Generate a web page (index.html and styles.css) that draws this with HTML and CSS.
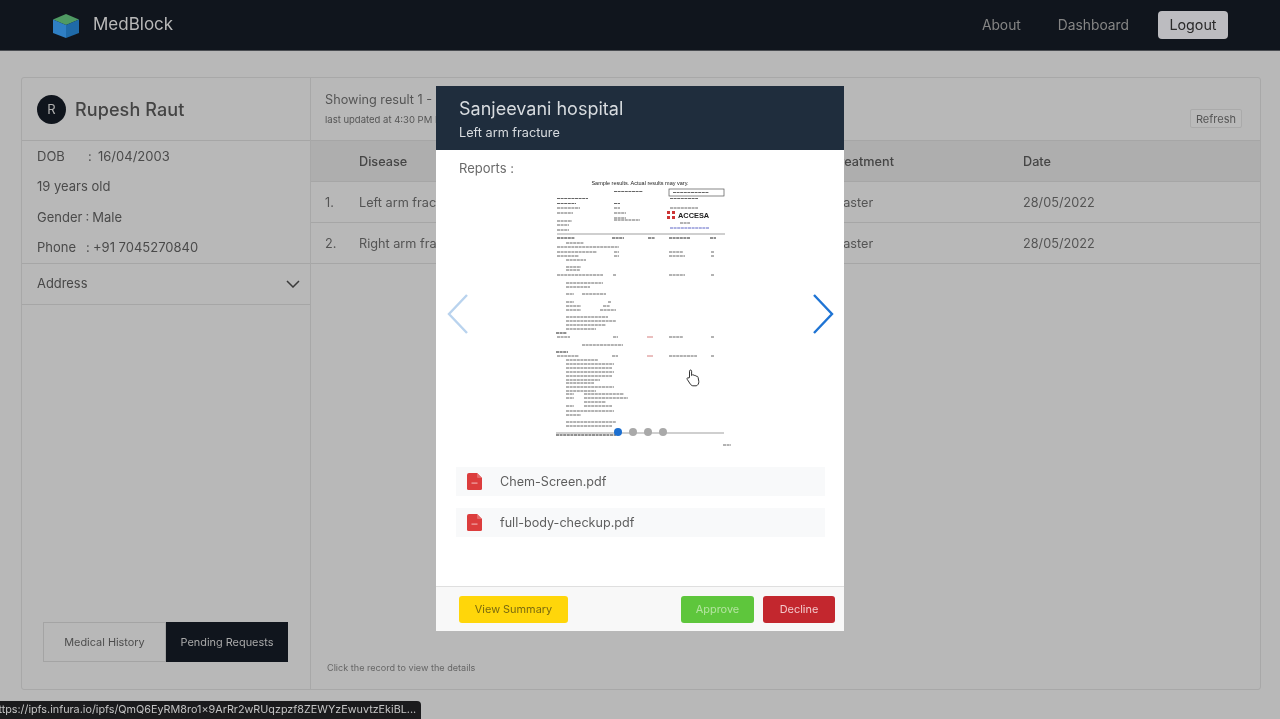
FILE: index.html
```html
<!DOCTYPE html>
<html lang="en">
<head>
<meta charset="utf-8">
<title>MedBlock</title>
<link rel="stylesheet" href="styles.css">
</head>
<body>
<div class="app">
  <header class="nav">
    <div class="brand">
      <svg class="cube" viewBox="0 0 28 26" width="28" height="26">
        <path d="M14 1 27 6.5 14 12 1 6.5Z" fill="#4f9a63"/>
        <path d="M1 6.5 14 12V25L1 20Z" fill="#2f7fc4"/>
        <path d="M27 6.5 14 12V25L27 20Z" fill="#1f6aa8"/>
      </svg>
      <span class="brand-name">MedBlock</span>
    </div>
    <nav class="nav-links">
      <a class="nav-link nav-link-about">About</a>
      <a class="nav-link">Dashboard</a>
      <button class="logout">Logout</button>
    </nav>
  </header>

  <main class="content">
    <section class="panel">
      <aside class="side">
        <div class="profile">
          <span class="avatar">R</span>
          <span class="profile-name">Rupesh Raut</span>
        </div>
        <div class="facts">
          <p class="fact"><span class="fact-dob">DOB</span><span class="fact-colon">:</span>16/04/2003</p>
          <p class="fact">19 years old</p>
          <p class="fact fact-gender">Gender : Male</p>
          <p class="fact"><span class="fact-phone">Phone</span><span class="fact-colon-tight">:</span>+91 7045270840</p>
        </div>
        <div class="address">
          <span>Address</span>
          <svg viewBox="0 0 14 8" width="14" height="8"><path d="M1 1 7 7 13 1" fill="none" stroke="#3a3a3a" stroke-width="1.5"/></svg>
        </div>
        <div class="tabs">
          <button class="tab">Medical History</button>
          <button class="tab tab-active">Pending Requests</button>
        </div>
      </aside>

      <div class="records">
        <div class="records-top">
          <div>
            <p class="showing">Showing result 1 - 2 of 2</p>
            <p class="updated">last updated at 4:30 PM IST</p>
          </div>
          <button class="refresh">Refresh</button>
        </div>
        <div class="row row-head"><span></span><span>Disease</span><span>Treatment</span><span>Date</span></div>
        <div class="row"><span>1.</span><span>Left arm fracture</span><span>Plaster</span><span>28/05/2022</span></div>
        <div class="row"><span>2.</span><span>Right arm fracture</span><span>Plaster</span><span>28/05/2022</span></div>
        <p class="hint">Click the record to view the details</p>
      </div>
    </section>
  </main>
</div>

<div class="modal">
  <div class="modal-head">
    <h2 class="modal-title">Sanjeevani hospital</h2>
    <p class="modal-sub">Left arm fracture</p>
  </div>
  <div class="modal-body">
    <p class="reports-label">Reports :</p>
    <div class="carousel">
      <svg class="doc" viewBox="0 0 200 280" width="200" height="280">
        <text class="doc-title" x="100" y="10" text-anchor="middle">Sample results. Actual results may vary.</text>
        <rect x="129" y="14" width="55" height="7" fill="none" stroke="#555" stroke-width=".7"/>
        <path class="doc-l" d="M74 16.5h29M133 17.5h36M17 23.5h31M130 23.5h28M17 28.5h19M74 28.5h6M17 33h23M74 33h6M130 33h28M17 38h16M74 38h12M74 43h12M74 45h26M17 46h15M17 50h12M17 55h12"/>
        <rect x="127" y="36" width="3" height="3" fill="#c33"/><rect x="132" y="36" width="3" height="3" fill="#c33"/>
        <rect x="127" y="41" width="3" height="3" fill="#c33"/><rect x="132" y="41" width="3" height="3" fill="#c33"/>
        <text class="doc-logo" x="138" y="43">ACCESA</text>
        <path class="doc-l" d="M140 48h10"/>
        <path class="doc-link" d="M130 53h39"/>
        <path class="doc-rule" d="M17 59h168"/>
        <path class="doc-b" d="M17 63h18M72 63h12M108 63h7M129 63h21M170 63h6"/>
        <path class="doc-l" d="M26 68h18M17 72h62M17 77h40M74 77h5M129 77h14M171 77h3M17 81h22M74 81h5M129 81h16M171 81h3M26 85h20M26 92h15M26 95h14M17 100h46M73 100h3M129 100h16M171 100h3M26 108h37M26 112h24M26 119h8M42 119h24M26 127h8M68 127h3M26 131h15M63 131h7M26 135h15M60 135h16M26 142h42M26 146h50M26 150h40M26 154h30"/>
        <path class="doc-b" d="M16 158h11"/>
        <path class="doc-l" d="M17 162h13M73 162h5M129 162h14M171 162h3M42 170h41"/>
        <path class="doc-red" d="M107 162h6M107 181h6"/>
        <path class="doc-b" d="M16 177h12"/>
        <path class="doc-l" d="M17 181h22M72 181h6M129 181h28M171 181h3M26 185h32M26 189h48M26 193h46M26 197h48M26 201h46M26 205h34M26 208h28M26 212h48M26 216h30M26 219h8M44 219h40M26 223h8M44 223h44M44 227h22M26 231h8M44 231h28M26 236h48M26 240h15M26 247h50M26 251h46"/>
        <path class="doc-rule" d="M16 258h168"/>
        <path class="doc-b" d="M16 260h60"/>
        <path class="doc-l" d="M183 270h8"/>
      </svg>
      <svg class="arrow arrow-prev" viewBox="0 0 22 40" width="22" height="40"><path d="M20 1 2 20 20 39" fill="none" stroke="#b9d3ee" stroke-width="2.4"/></svg>
      <svg class="arrow arrow-next" viewBox="0 0 22 40" width="22" height="40"><path d="M2 1 20 20 2 39" fill="none" stroke="#1f74d4" stroke-width="2.4"/></svg>
      <div class="dots">
        <span class="dot dot-on"></span><span class="dot"></span><span class="dot"></span><span class="dot"></span>
      </div>
      <svg class="pointer" viewBox="0 0 14 18" width="14" height="18">
        <path d="M3.5 8V2.2C3.5 .6 5.6 .6 5.6 2.2V6.5L6 6.3C6.4 5.3 8 5.5 8.1 6.7 8.6 6 10 6.3 10.1 7.4 10.7 6.9 12 7.3 12.1 8.5L12.8 12.3C13 14.5 11.8 16.5 10.2 16.8H6.8C5.3 16.6 4.5 15.4 3.6 14L1.2 10.3C.6 9 2 8 3 9.2Z" fill="#fff" stroke="#333" stroke-width="1"/>
      </svg>
    </div>
    <ul class="files">
      <li class="file">
        <svg viewBox="0 0 15 17" width="15" height="17"><path d="M2 0H10L15 5V15.500A1.500 1.500 0 0 1 13.500 17H1.500A1.500 1.500 0 0 1 0 15.500V2A2 2 0 0 1 2 0Z" fill="#dc3d3d"/><path d="M10 0 15 5H11A1 1 0 0 1 10 4Z" fill="#e56a6a"/><rect x="4.500" y="9.500" width="6" height="1.200" fill="#f0a8a8"/></svg>
        <span class="file-name">Chem-Screen.pdf</span>
      </li>
      <li class="file">
        <svg viewBox="0 0 15 17" width="15" height="17"><path d="M2 0H10L15 5V15.500A1.500 1.500 0 0 1 13.500 17H1.500A1.500 1.500 0 0 1 0 15.500V2A2 2 0 0 1 2 0Z" fill="#dc3d3d"/><path d="M10 0 15 5H11A1 1 0 0 1 10 4Z" fill="#e56a6a"/><rect x="4.500" y="9.500" width="6" height="1.200" fill="#f0a8a8"/></svg>
        <span class="file-name">full-body-checkup.pdf</span>
      </li>
    </ul>
  </div>
  <div class="modal-foot">
    <button class="btn btn-summary">View Summary</button>
    <div class="foot-actions">
      <button class="btn btn-approve">Approve</button>
      <button class="btn btn-decline">Decline</button>
    </div>
  </div>
</div>

<div class="status-url"><span>https://ipfs.infura.io/ipfs/QmQ6EyRM8ro1x9ArRr2wRUqzpzf8ZEWYzEwuvtzEkiBL...</span></div>
</body>
</html>
```
FILE: styles.css
```css
* { box-sizing: border-box; }
html, body { margin: 0; padding: 0; height: 100%; overflow: hidden; }
body { background: #b8b8b8; color: #474747; font-family: Inter, "Liberation Sans", sans-serif; position: relative; }
p, h2, ul { margin: 0; padding: 0; }
button { font-family: inherit; }

.app { height: 719px; display: flex; flex-direction: column; filter: blur(.4px); }

.nav { height: 51px; flex: none; background: #10151d; border-bottom: 1px solid #4a4d52; display: flex; align-items: center; justify-content: space-between; padding: 0 52px; }
.brand { display: flex; align-items: center; gap: 13px; }
.cube { margin-top: 2px; }
.brand-name { font-size: 17px; color: #b9b9b9; position: relative; top: -1px; }
.nav-links { display: flex; align-items: center; }
.nav-link { font-size: 13.800px; color: #858585; margin-right: 29px; }
.nav-link-about { margin-right: 37px; }
.logout { width: 70px; height: 28px; background: #bcbcc0; color: #2a2a2a; border: 0; border-radius: 4px; font-size: 14.300px; padding: 0 0 1px; }

.content { flex: 1; padding: 26px 19px 29px 21px; min-height: 0; }
.panel { height: 100%; display: flex; border: 1px solid #a8a8a8; border-radius: 3px; }

.side { width: 289px; flex: none; border-right: 1px solid #a8a8a8; display: flex; flex-direction: column; }
.profile { height: 63px; display: flex; align-items: center; gap: 9px; padding-left: 15px; border-bottom: 1px solid #a6a6a6; }
.avatar { width: 29px; height: 29px; border-radius: 50%; background: #10151d; color: #b0b0b0; font-size: 13px; display: flex; align-items: center; justify-content: center; }
.profile-name { font-size: 18px; font-weight: 500; color: #444; letter-spacing: .1px; }
.facts { height: 123px; padding: 0 15px; border-bottom: 1px solid #a6a6a6; }
.fact { font-size: 13px; height: 30.300px; line-height: 30.300px; color: #4a4a4a; }
.fact-gender { word-spacing: -.6px; }
.fact-dob { display: inline-block; width: 51px; }
.fact-phone { display: inline-block; width: 49px; }
.fact-colon { display: inline-block; width: 10px; }
.fact-colon-tight { display: inline-block; width: 7px; }
.address { height: 41px; display: flex; align-items: center; justify-content: space-between; padding: 0 10px 1px 15px; border-bottom: 1px solid #a6a6a6; font-size: 12.900px; }
.tabs { margin: auto 0 27px 21px; display: flex; }
.tab { width: 123px; height: 40px; font-size: 10.900px; color: #4d4d4d; background: transparent; border: 1px solid #a4a4a4; padding: 0; }
.tab-active { width: 122px; background: #10151d; border-color: #10151d; color: #a9a9a9; }

.records { flex: 1; min-width: 0; display: flex; flex-direction: column; }
.records-top { height: 63px; display: flex; justify-content: space-between; padding: 14px 18px 0 14px; border-bottom: 1px solid #a6a6a6; }
.showing { font-size: 12.700px; color: #555; line-height: 16px; }
.updated { font-size: 9.500px; color: #555; line-height: 12px; margin-top: 6px; }
.refresh { align-self: flex-start; margin-top: 17px; width: 52px; height: 19px; background: #bababa; border: 1px solid #aaa; border-radius: 2px; font-size: 11px; color: #555; padding: 0; }
.row { height: 41px; flex: none; display: grid; grid-template-columns: 34px 473px 191px 1fr; align-items: center; padding-left: 14px; font-size: 12.700px; color: #545454; border-bottom: 1px solid #a6a6a6; }
.row-head { background: #aeaeae; font-weight: 500; color: #454545; }
.hint { margin-top: auto; padding: 0 0 15px 16px; font-size: 9.100px; color: #666; line-height: 12px; }

.modal { position: absolute; left: 436px; top: 86px; width: 408px; height: 545px; background: #fff; display: flex; flex-direction: column; filter: blur(.4px); }
.modal-head { height: 64px; flex: none; background: #1f2d3d; padding: 12px 23px 0; color: #d7dbdf; }
.modal-title { font-size: 18px; font-weight: 400; line-height: 22px; }
.modal-sub { font-size: 12.700px; line-height: 16px; margin-top: 5px; }
.modal-body { flex: 1; min-height: 0; }
.reports-label { font-size: 13px; color: #6a6a6a; padding: 10px 23px 0; line-height: 16px; height: 25px; }
.carousel { position: relative; height: 280px; display: flex; justify-content: center; margin-bottom: 12px; }
.arrow { position: absolute; top: 119px; }
.arrow-prev { left: 11px; }
.arrow-next { right: 10px; }
.dots { position: absolute; left: 178px; top: 253px; display: flex; gap: 7px; }
.dot { width: 8px; height: 8px; border-radius: 50%; background: #a9a9a9; }
.dot-on { background: #1c6fd0; }
.pointer { position: absolute; left: 250px; top: 194px; }
.doc { display: block; filter: blur(.55px); }
.doc-title { font-size: 5.500px; fill: #222; font-family: "Liberation Sans", sans-serif; }
.doc-logo { font-size: 7.400px; font-weight: 700; fill: #222; font-family: "Liberation Sans", sans-serif; }
.doc-l { stroke: #555; stroke-width: .9; stroke-dasharray: 3 .6; fill: none; }
.doc-b { stroke: #222; stroke-width: 1; stroke-dasharray: 3 .6; fill: none; }
.doc-link { stroke: #4a52c0; stroke-width: .9; stroke-dasharray: 3 .6; fill: none; }
.doc-red { stroke: #d07070; stroke-width: .9; fill: none; }
.doc-rule { stroke: #777; stroke-width: .7; fill: none; }

.files { list-style: none; padding: 0 19px 0 20px; }
.file { height: 29px; background: #f8f9fa; margin-bottom: 12px; display: flex; align-items: center; gap: 18px; padding-left: 11px; font-size: 12.600px; color: #5e5e5e; }
.file-name { padding-bottom: 1px; }

.modal-foot { height: 45px; flex: none; background: #f8f8f8; border-top: 1px solid #dfdfdf; display: flex; justify-content: space-between; align-items: center; padding: 0 9px 0 23px; }
.foot-actions { display: flex; gap: 9px; }
.btn { height: 27px; border: 0; border-radius: 3px; font-size: 10.900px; padding: 0 0 1px; }
.btn-summary { width: 109px; background: #ffd60a; color: #7a6a10; }
.btn-approve { width: 73px; background: #5ec63c; color: #b4e4a0; }
.btn-decline { width: 72px; background: #c3272e; color: #f3c9cb; }

.status-url { position: absolute; left: 0; bottom: 0; width: 421px; height: 18px; background: #1b1b1d; border-top-right-radius: 4px; overflow: hidden; color: #c4c4c4; font-size: 10.800px; line-height: 18px; white-space: nowrap; filter: blur(.3px); }
.status-url span { display: block; margin-left: -8px; }
```
